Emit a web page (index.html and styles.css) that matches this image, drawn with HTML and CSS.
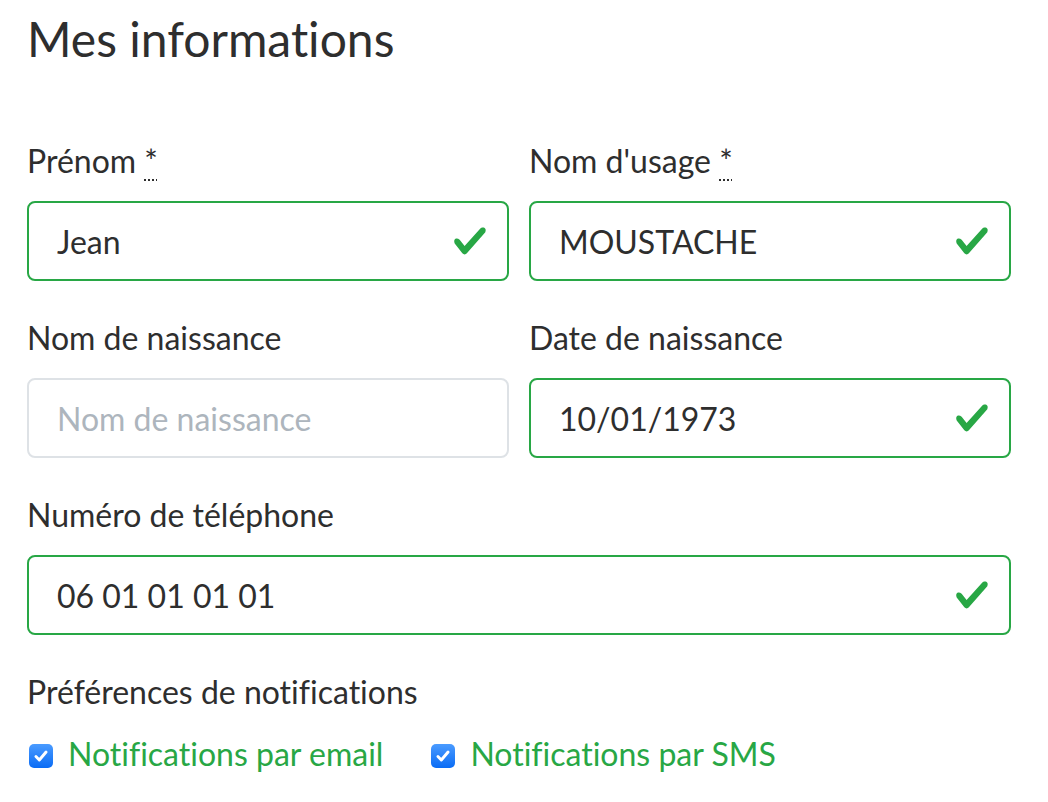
FILE: index.html
```html
<!DOCTYPE html>
<html lang="fr">
<head>
<meta charset="utf-8">
<title>Mes informations</title>
<link rel="stylesheet" href="styles.css">
</head>
<body>
<main class="page">
  <h1 class="title">Mes informations</h1>
  <div class="row">
    <div class="group">
      <label class="label">Prénom <abbr title="obligatoire">*</abbr></label>
      <div class="field valid">
        <input class="input" type="text" value="Jean">
        <svg class="check" viewBox="0 0 8 8" width="36" height="36"><path fill="#28a745" d="M2.3 6.73L.6 4.53c-.4-1.04.46-1.4 1.1-.8l1.1 1.4 3.4-3.8c.6-.63 1.6-.27 1.2.7l-4 4.6c-.43.5-.8.4-1.1.1z"/></svg>
      </div>
    </div>
    <div class="group">
      <label class="label">Nom d'usage <abbr title="obligatoire">*</abbr></label>
      <div class="field valid">
        <input class="input" type="text" value="MOUSTACHE">
        <svg class="check" viewBox="0 0 8 8" width="36" height="36"><path fill="#28a745" d="M2.3 6.73L.6 4.53c-.4-1.04.46-1.4 1.1-.8l1.1 1.4 3.4-3.8c.6-.63 1.6-.27 1.2.7l-4 4.6c-.43.5-.8.4-1.1.1z"/></svg>
      </div>
    </div>
    <div class="group">
      <label class="label">Nom de naissance</label>
      <div class="field">
        <input class="input" type="text" placeholder="Nom de naissance">
      </div>
    </div>
    <div class="group">
      <label class="label">Date de naissance</label>
      <div class="field valid">
        <input class="input" type="text" value="10/01/1973">
        <svg class="check" viewBox="0 0 8 8" width="36" height="36"><path fill="#28a745" d="M2.3 6.73L.6 4.53c-.4-1.04.46-1.4 1.1-.8l1.1 1.4 3.4-3.8c.6-.63 1.6-.27 1.2.7l-4 4.6c-.43.5-.8.4-1.1.1z"/></svg>
      </div>
    </div>
    <div class="group full">
      <label class="label">Numéro de téléphone</label>
      <div class="field valid">
        <input class="input" type="text" value="06 01 01 01 01">
        <svg class="check" viewBox="0 0 8 8" width="36" height="36"><path fill="#28a745" d="M2.3 6.73L.6 4.53c-.4-1.04.46-1.4 1.1-.8l1.1 1.4 3.4-3.8c.6-.63 1.6-.27 1.2.7l-4 4.6c-.43.5-.8.4-1.1.1z"/></svg>
      </div>
    </div>
  </div>
  <div class="prefs">
    <div class="label prefs-label">Préférences de notifications</div>
    <div class="checks">
      <label class="check-item">
        <span class="box"><svg viewBox="0 0 16 16" width="18" height="18"><path d="M3.5 8.5l3 3 6-7" fill="none" stroke="#fff" stroke-width="2.6" stroke-linecap="round" stroke-linejoin="round"/></svg></span>
        <span class="check-text">Notifications par email</span>
      </label>
      <label class="check-item">
        <span class="box"><svg viewBox="0 0 16 16" width="18" height="18"><path d="M3.5 8.5l3 3 6-7" fill="none" stroke="#fff" stroke-width="2.6" stroke-linecap="round" stroke-linejoin="round"/></svg></span>
        <span class="check-text">Notifications par SMS</span>
      </label>
    </div>
  </div>
</main>
</body>
</html>
```

FILE: styles.css
```css
* { box-sizing: border-box; }

body {
  margin: 0;
  background: #fff;
  color: #2e2e2e;
  font-family: Lato, "Open Sans", sans-serif;
  font-variant-ligatures: no-common-ligatures;
}

.page {
  width: 1011px;
  padding: 9px 0 0 27px;
}

.title {
  margin: 0 0 68px;
  font-size: 48px;
  line-height: 60px;
  font-weight: 400;
  color: #2e2e2e;
}

.row {
  display: grid;
  grid-template-columns: minmax(0, 1fr) minmax(0, 1fr);
  column-gap: 20px;
}

.group {
  min-width: 0;
  margin-bottom: 33px;
}

.full {
  grid-column: 1 / span 2;
}

.label {
  display: block;
  font-size: 32px;
  line-height: 48px;
  margin-bottom: 16px;
  color: #2e2e2e;
}

abbr {
  text-decoration: underline dotted;
  text-decoration-thickness: 2px;
  text-underline-offset: 6px;
  cursor: help;
}

.field {
  display: flex;
  align-items: center;
  height: 80px;
  border: 2px solid #dee2e6;
  border-radius: 8px;
  background: #fff;
}

.field.valid {
  border-color: #28a745;
}

.input {
  flex: 1;
  min-width: 0;
  width: 0;
  height: 100%;
  border: 0;
  outline: none;
  background: transparent;
  padding: 0 0 0 28px;
  font-family: Lato, "Open Sans", sans-serif;
  font-variant-ligatures: no-common-ligatures;
  font-size: 32px;
  color: #2e2e2e;
}

.input::placeholder {
  color: #adb5bd;
  opacity: 1;
}

.check {
  flex: none;
  margin-right: 19px;
}

.prefs-label {
  margin-bottom: 14px;
}

.checks {
  display: flex;
  align-items: center;
  height: 48px;
}

.check-item {
  display: flex;
  align-items: center;
  margin-right: 46px;
  font-size: 32px;
  line-height: 48px;
  color: #28a745;
}

.box {
  flex: none;
  display: flex;
  align-items: center;
  justify-content: center;
  width: 24px;
  height: 24px;
  margin: 4px 15px 0 2px;
  border-radius: 5px;
  background: linear-gradient(#4a9bff, #0a6cf5);
}

.box svg {
  display: block;
}
```
